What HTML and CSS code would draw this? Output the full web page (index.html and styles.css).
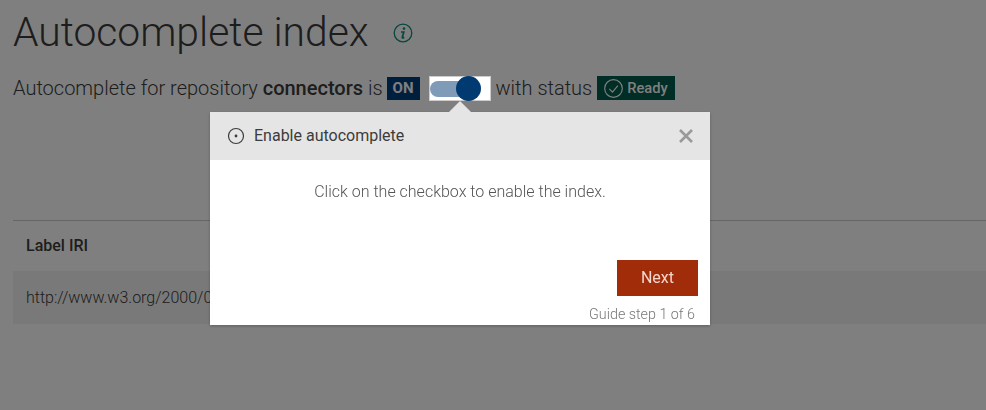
FILE: index.html
```html
<!DOCTYPE html>
<html lang="en">
<head>
<meta charset="utf-8">
<title>Autocomplete index</title>
<link rel="stylesheet" href="styles.css">
</head>
<body>
<main class="page">
  <h1 class="title">Autocomplete index
    <svg class="info" viewBox="0 0 20 20" width="20" height="20" aria-hidden="true">
      <circle cx="10" cy="10" r="8.8" fill="none" stroke="currentColor" stroke-width="1.3"/>
      <circle cx="11" cy="5.6" r="1.3" fill="currentColor"/>
      <path d="M8 9h2.8l-1.5 5.2q-.2.9.6.8l1.4-.6" fill="none" stroke="currentColor" stroke-width="1.7"/>
    </svg>
  </h1>
  <div class="status-line">
    <span>Autocomplete for repository <strong>connectors</strong> is</span>
    <span class="badge badge-on">ON</span>
    <span class="toggle-box"><span class="track"></span><span class="knob"></span></span>
    <span>with status</span>
    <span class="badge badge-ready">
      <svg viewBox="0 0 20 20" width="21" height="21" aria-hidden="true">
        <circle cx="10" cy="10" r="8.4" fill="none" stroke="currentColor" stroke-width="1.1"/>
        <path d="M6 10.4l3 3 5.2-6.2" fill="none" stroke="currentColor" stroke-width="1.1"/>
      </svg>
      Ready</span>
  </div>
  <section class="table">
    <div class="table-head">Label IRI</div>
    <div class="table-row">http://www.w3.org/2000/01/rdf-schema#label</div>
  </section>
</main>
<div class="overlay"></div>
<div class="guide">
  <span class="guide-arrow"></span>
  <header class="guide-head">
    <svg viewBox="0 0 18 18" width="18" height="18" aria-hidden="true">
      <circle cx="9" cy="9" r="7.5" fill="none" stroke="#3c3c3c" stroke-width="1.2"/>
      <circle cx="9" cy="9" r="1.4" fill="#3c3c3c"/>
    </svg>
    <span class="guide-title">Enable autocomplete</span>
    <svg class="close" viewBox="0 0 16 16" width="16" height="16" aria-hidden="true">
      <path d="M2 2l12 12M14 2L2 14" fill="none" stroke="#999" stroke-width="2.6"/>
    </svg>
  </header>
  <div class="guide-body">Click on the checkbox to enable the index.</div>
  <footer class="guide-foot">
    <button class="next" type="button">Next</button>
    <div class="step">Guide step 1 of 6</div>
  </footer>
</div>
</body>
</html>
```
FILE: styles.css
```css
html, body {
  margin: 0;
  height: 100%;
  overflow: hidden;
}
body {
  background: #fff;
  font-family: Roboto, "Liberation Sans", sans-serif;
  font-weight: 300;
  color: #3c3c3c;
}
.page {
  padding: 7px 0 0 13px;
}
.title {
  margin: 0;
  font-size: 40.8px;
  line-height: 50px;
  font-weight: 300;
  color: #3a3a3a;
  display: flex;
  align-items: center;
  gap: 24px;
}
.info {
  color: #0f8f7c;
  margin-top: 1px;
}
.status-line {
  margin-top: 18px;
  display: flex;
  align-items: center;
  font-size: 20px;
  line-height: 24px;
  height: 26px;
}
.status-line strong {
  font-weight: 500;
}
.badge {
  color: #fff;
  font-weight: 700;
  font-size: 15px;
  display: inline-flex;
  align-items: center;
}
.badge-on {
  background: #003e7e;
  height: 23px;
  padding: 0 6px;
  margin-left: 4px;
}
.badge-ready {
  background: #005a4c;
  height: 24px;
  padding: 0 7px 0 6px;
  gap: 3px;
  margin-left: 5px;
  font-size: 14.7px;
  font-weight: 500;
}
.toggle-box {
  position: relative;
  z-index: 3;
  width: 62px;
  height: 25px;
  margin: 0 5px 0 9px;
  background: #fff;
  box-sizing: border-box;
  border: 1px solid #ccc;
}
.track {
  position: absolute;
  left: 0;
  top: 4px;
  width: 42px;
  height: 16px;
  border-radius: 8px;
  background: #7f9bb8;
}
.knob {
  position: absolute;
  left: 26px;
  top: -1px;
  width: 25px;
  height: 25px;
  border-radius: 50%;
  background: #003a70;
}
.table {
  margin-top: 119px;
  border-top: 1px solid #ccc;
}
.table-head {
  height: 48px;
  padding-bottom: 2px;
  padding-left: 13px;
  display: flex;
  align-items: center;
  font-size: 16px;
  font-weight: 500;
}
.table-row {
  height: 53px;
  padding-left: 13px;
  display: flex;
  align-items: center;
  background: #f2f2f2;
  font-size: 16px;
}
.overlay {
  position: fixed;
  inset: 0;
  background: rgba(0, 0, 0, .5);
  z-index: 2;
}
.guide {
  position: fixed;
  left: 210px;
  top: 112px;
  width: 500px;
  height: 213px;
  z-index: 4;
  background: #fff;
  box-shadow: 0 1px 3px rgba(0, 0, 0, .25);
  display: flex;
  flex-direction: column;
}
.guide-arrow {
  position: absolute;
  left: 239px;
  top: -11px;
  width: 0;
  height: 0;
  border-left: 11px solid transparent;
  border-right: 11px solid transparent;
  border-bottom: 11px solid #e5e5e5;
}
.guide-head {
  height: 47px;
  padding-bottom: 1px;
  flex: none;
  background: #e5e5e5;
  display: flex;
  align-items: center;
  padding-left: 17px;
  padding-right: 17px;
  gap: 9px;
  font-size: 16px;
  font-weight: 400;
  color: #3c3c3c;
}
.guide-title {
  flex: 1;
}
.close {
  margin-right: -1px;
}
.guide-body {
  flex: 1;
  padding-top: 22px;
  text-align: center;
  font-size: 16px;
  line-height: 20px;
  color: #555;
}
.guide-foot {
  display: flex;
  flex-direction: column;
  align-items: flex-end;
  padding-right: 12px;
}
.next {
  width: 81px;
  height: 36px;
  border: 0;
  padding: 0 0 2px;
  background: #a12c0a;
  color: #f3d6cc;
  font: 400 16px Roboto, sans-serif;
}
.step {
  height: 29px;
  line-height: 36px;
  padding-right: 3px;
  font-size: 14.3px;
  color: #777;
}
```
